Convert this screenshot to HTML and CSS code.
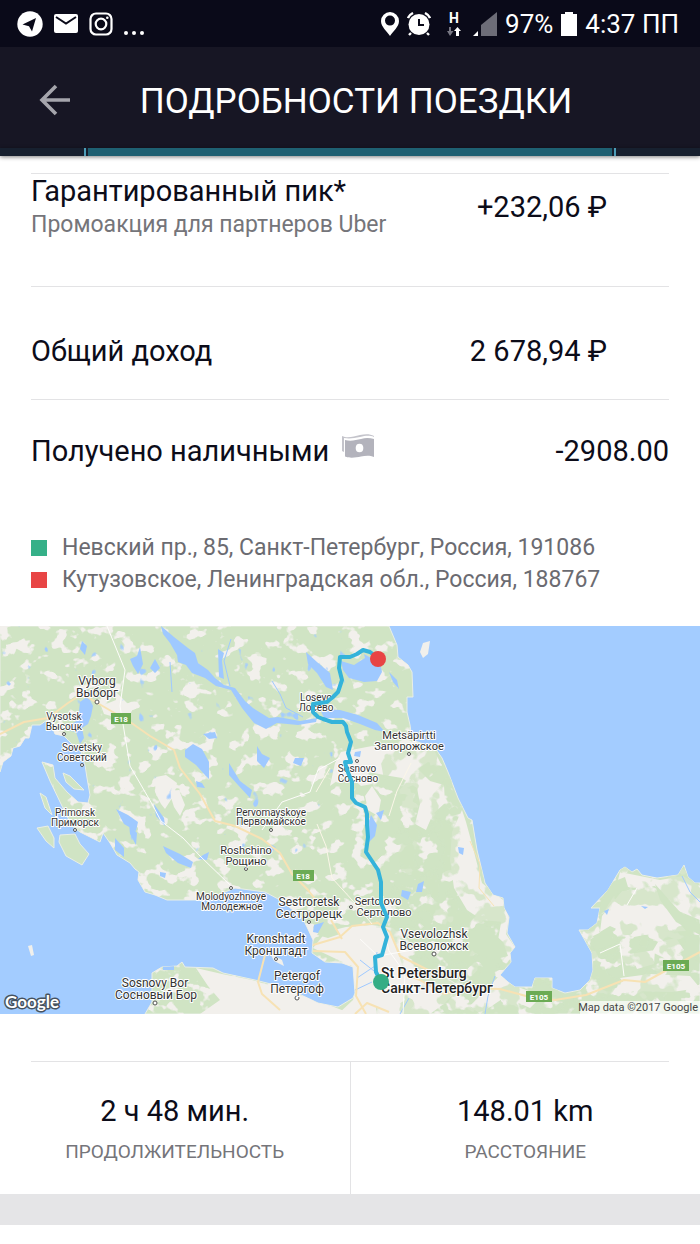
FILE: index.html
```html
<!DOCTYPE html>
<html lang="ru">
<head>
<meta charset="utf-8">
<meta name="viewport" content="width=device-width, initial-scale=1">
<title>Подробности поездки</title>
<link rel="stylesheet" href="styles.css">
</head>
<body>
<div class="status">
  <div class="status-side">
    <svg width="26" height="26" viewBox="0 0 26 26"><circle cx="13" cy="13" r="12.7" fill="#fff"/><path d="M5.500 13.600 19 7l-4 13.500-3-5.300z" fill="#0a0a19"/></svg>
    <svg width="24" height="19" viewBox="0 0 24 19"><rect width="24" height="19" rx="2" fill="#fff"/><path d="m2 3 10 6.500L22 3" fill="none" stroke="#0a0a19" stroke-width="2"/></svg>
    <svg width="24" height="24" viewBox="0 0 24 24" fill="none" stroke="#fff" stroke-width="2.200"><rect x="1.500" y="1.500" width="21" height="21" rx="5.500"/><circle cx="12" cy="12" r="5.300"/><circle cx="18.300" cy="5.800" r="1.300" fill="#fff" stroke="none"/></svg>
    <svg width="20" height="26" viewBox="0 0 20 26" fill="#fff"><circle cx="2" cy="22" r="2"/><circle cx="10" cy="22" r="2"/><circle cx="18" cy="22" r="2"/></svg>
  </div>
  <div class="status-side status-right">
    <svg width="18" height="24" viewBox="0 0 18 24"><path fill="#fff" fill-rule="evenodd" d="M9 0a9 9 0 0 1 9 9c0 6-6 10-9 15C6 19 0 15 0 9a9 9 0 0 1 9-9zm0 3.600a5 5 0 1 0 0 10 5 5 0 0 0 0-10z"/></svg>
    <svg width="24" height="24" viewBox="0 0 24 24"><circle cx="12" cy="12.500" r="10.500" fill="#fff"/><path d="M12 7v6h5" fill="none" stroke="#0a0a19" stroke-width="2"/><path d="M1 6q1-3 5-5M18 1q4 2 5 5M4 21l-2 2M20 21l2 2" fill="none" stroke="#fff" stroke-width="2.400"/></svg>
    <span class="net"><span class="net-type">H</span><svg width="14" height="9" viewBox="0 0 14 9"><path d="M2 0h2v4h2.500L3 9 0 4h2z" fill="#777783"/><path d="M9 9V4H7l3.500-4L14 4h-2v5z" fill="#fff"/></svg></span>
    <svg width="24" height="24" viewBox="0 0 24 24"><path d="M8 24V13L24 0v24z" fill="#6d6d78"/><path d="M0 24l5-5v5z" fill="#fff"/></svg>
    <span class="status-text">97%</span>
    <svg width="16" height="24" viewBox="0 0 16 24"><path d="M4 0h8v2h4v22H0V2h4z" fill="#fff"/></svg>
    <span class="status-text">4:37 ПП</span>
  </div>
</div>
<header class="toolbar">
  <button class="back" type="button" aria-label="Назад"><svg width="32" height="32" viewBox="0 0 32 32" fill="none" stroke="#a5a5ac" stroke-width="3.600"><path d="M31 16H3M17 2 3 16l14 14"/></svg></button>
  <h1 class="title">ПОДРОБНОСТИ ПОЕЗДКИ</h1>
</header>
<div class="pager"><span class="pager-tick"></span><span class="pager-fill"></span><span class="pager-tick"></span></div>

<main>
  <section class="rows">
    <div class="row">
      <div><div class="label">Гарантированный пик*</div><div class="note">Промоакция для партнеров Uber</div></div>
      <div class="value value-offset">+232,06 ₽</div>
    </div>
    <div class="row row-total">
      <div class="label">Общий доход</div>
      <div class="value">2 678,94 ₽</div>
    </div>
    <div class="row row-cash">
      <div class="label label-icon">Получено наличными
        <svg width="32" height="26" viewBox="0 0 32 26"><path d="M0 2c6 3 12 0 18-1 6-1 10-1 14 1v1C27 1 23 2 18 3 12 4 8 5 2 4v14L0 17z" fill="#c4c4cb"/><path d="M3 6c6 1.500 11 0 16-1 5-1.500 9-1 13 0v18c-4-2-9-1.500-13-.5-5 1-11 2-16 0z" fill="#b3b3bc"/><ellipse cx="17.500" cy="14" rx="3.800" ry="4.300" fill="#fff"/></svg>
      </div>
      <div class="value value-end">-2908.00</div>
    </div>
  </section>
  <ul class="stops">
    <li class="stop"><span class="dot dot-from"></span>Невский пр., 85, Санкт-Петербург, Россия, 191086</li>
    <li class="stop"><span class="dot dot-to"></span>Кутузовское, Ленинградская обл., Россия, 188767</li>
  </ul>

  <svg class="map" viewBox="0 0 700 388" role="img" aria-label="Маршрут поездки">
    <defs>
      <filter id="fields" x="0" y="0" width="100%" height="100%" color-interpolation-filters="sRGB">
        <feTurbulence type="fractalNoise" baseFrequency="0.06 0.07" numOctaves="3" seed="11"/>
        <feColorMatrix values="0 0 0 0 .948  0 0 0 0 .94  0 0 0 0 .925  14 0 0 0 -8"/>
      </filter>
      <filter id="woods" x="0" y="0" width="100%" height="100%" color-interpolation-filters="sRGB">
        <feTurbulence type="fractalNoise" baseFrequency="0.05 0.05" numOctaves="3" seed="23"/>
        <feColorMatrix values="0 0 0 0 .816  0 0 0 0 .894  0 0 0 0 .769  14 0 0 0 -7.200"/>
      </filter>
      <filter id="ponds" x="0" y="0" width="100%" height="100%" color-interpolation-filters="sRGB">
        <feTurbulence type="fractalNoise" baseFrequency="0.08 0.06" numOctaves="2" seed="5"/>
        <feColorMatrix values="0 0 0 0 .64  0 0 0 0 .8  0 0 0 0 1  0 16 0 0 -11.800"/>
      </filter>
      <clipPath id="land"><path id="coast" d="M0 0H389L397 19 398 31 408 39 412 46 413 71 407 71 407 86 410 99 412 114 435 122 442 132 448 146 458 172 468 192 472 194 477 224 485 257 493 269 503 272 504 282 509 291 507 307 515 321 510 327 511 336 500 349 508 356 515 361 532 361 535 352 552 352 552 362 565 367 580 364 590 354 593 344 592 327 583 311 579 304 588 304 597 297 600 282 591 282 608 264 620 244 625 241 632 246 637 243 642 249 657 252 678 249 684 239 688 251 695 257 700 257V388H145L152 376 152 347 162 341 177 340 182 336 185 341 213 342 223 347 255 354 267 357 282 361 295 366 318 377 338 381 353 372 355 367 353 341 342 337 325 336 312 327 313 314 307 301 302 291 280 274 265 266 235 262 215 270 200 274 167 274 155 269 145 266 138 254 139 246 135 243 130 237 117 229 110 217 103 207 100 216 90 211 80 206 72 200 62 180 50 155 42 136 53 139 55 152 67 166 78 176 88 177 90 169 87 152 85 139 80 122 72 118 64 110 55 108 51 98 47 94 40 99 32 99 29 112 25 112 20 120 13 122 11 130 3 136 0 146Z"/></clipPath>
      <clipPath id="east"><path d="M376 110 450 110 520 270V388H376V300L400 240ZM575 230H700V388H520V350H575Z"/></clipPath>
    </defs>
    <rect width="700" height="388" fill="#a3ccff"/>
    <g fill="#d0e4c4" stroke="#e9eee6" stroke-width="1">
      <use href="#coast"/>
      <path d="M37 202 48 200 54 212 54 222 46 215ZM60 209 75 208 80 218 89 228 82 239 66 230 59 216ZM40 167 46 171 52 189 45 182ZM63 147 70 150 78 158 84 164 74 163 66 156Z"/>
    </g>
    <path d="M270 327 282 334 284 340 274 335ZM28 320 32 319 34 329 31 330ZM423 17 430 15 428 28 423 32 420 26ZM80 122 86 122 84 128Z" fill="#f1f0ec"/>
    <g clip-path="url(#land)">
      <rect width="700" height="388" filter="url(#fields)"/>
      <g fill="#f2f0ec">
        <path d="M116 66 133 83 127 93 118 92 104 88 101 80 116 74ZM156 151 166 149 177 157 174 169 165 183 161 178 155 166ZM169 165 179 164 185 179 180 190 174 181Z"/>
        <path d="M341 126 372 120 408 119 434 124 442 140 428 136 418 143 430 155 444 159 445 177 433 188 426 204 415 198 420 178 417 162 402 152 390 150 368 146 372 158 361 160 350 150 341 152 330 160 335 137ZM372 160 381 174 378 190 368 184 365 170ZM462 184 466 196 472 218 482 257 503 274 504 296 482 294 467 284 454 262 450 234 452 206Z"/>
        <path d="M326 306 346 301 372 299 393 302 403 317 412 340 439 347 460 360 445 377 430 388H338L353 374 355 367 352 340 334 332 313 322ZM504 280 509 292 506 308 514 320 506 331 498 314ZM500 349 518 361 542 370 530 382 505 371 480 388 470 380Z"/>
        <path d="M620 246 640 250 660 254 683 250 700 260V294L676 284 655 260 632 262 617 258ZM622 265 655 262 670 285 686 305 660 306 634 311 610 300 600 306 602 290ZM658 316 676 312 684 324 668 334 652 326ZM630 328 655 324 654 338 637 343ZM620 352 650 348 690 350 700 362 672 366 630 365Z"/>
        <path d="M196 342 222 348 252 354 294 367 334 381 352 388H200L220 374 208 360Z"/>
      </g>
      <g clip-path="url(#east)" opacity=".8"><rect width="700" height="388" filter="url(#woods)"/></g>
      <path fill="#f2f0ec" d="M356 300 388 302 396 318 402 340 398 358 405 374 390 384 362 380 358 340Z"/>
      <g fill="#d0e4c4"><path d="M468 305 489 303 503 316 508 330 491 334 475 327 466 318ZM610 257 625 251 628 261 613 271 604 286 596 290 605 270ZM655 258 680 286 700 298V309L676 296 660 274ZM326 295 340 308 328 312 317 309ZM593 310 610 302 614 318 596 324Z"/></g>
      <rect width="345" height="260" filter="url(#ponds)"/>
      <g fill="#9fc9ff">
        <path d="M161 0 174 11 188 22 195 27 198 37 208 44 215 52 224 59 235 62 245 75 253 82 269 92 278 91 300 95 317 92 316 96 298 99 277 97 266 103 254 97 242 82 231 64 216 60 205 52 192 47 186 39 178 36 177 29 170 17 163 8Z"/>
        <path d="M80 76 88 70 93 80 91 90 88 98 82 102 84 112 80 118 76 106 66 104 70 99 78 94ZM185 124 193 118 202 123 209 136 209 153 204 148 196 139 185 131ZM196 155 202 157 205 162 197 161ZM203 108 215 106 217 112 209 113ZM218 23 224 27 222 35 224 53 219 51ZM130 33 137 30 140 21 143 38 138 48 133 40ZM150 42 155 33 160 42 155 47ZM82 15 87 20 85 29 80 23Z"/>
        <path d="M306 26 317 36 330 47 333 64 326 61 317 47 308 38ZM341 35 354 39 365 32 364 28 380 37 382 46 377 55 364 56 349 52 343 44ZM389 46 397 54 399 63 393 56ZM320 83 340 84 358 89 377 97 385 106 375 104 360 98 343 92 324 92ZM229 137 240 155 252 164 250 172 238 159 229 149ZM257 120 262 128 270 132 264 142 257 135ZM295 132 304 132 301 140 293 137ZM116 183 128 189 138 196 136 205 124 198ZM154 178 164 192 165 200 156 190ZM115 212 124 222 124 231 115 224ZM163 220 180 228 193 236 191 242 178 237 166 227ZM203 229 209 226 207 234 198 233ZM160 246 166 247 165 252 160 250ZM129 198 137 207 136 219 130 208ZM371 189 377 199 375 210 369 216 368 198ZM402 264 411 266 408 274 401 270ZM418 258 424 255 422 266 416 266ZM458 221 464 222 463 229 459 227ZM314 299 324 296 318 307 313 306ZM163 340 174 340 174 344 163 344ZM604 285 609 283 607 289ZM641 280 648 281 645 283ZM376 187 384 184 381 194ZM355 126 361 125 360 131 354 130Z"/>
      </g>
      <g fill="none" stroke="#9fc9ff" stroke-width="1">
        <path d="M231 13 224 35 230 60M170 36 172 66M272 55 280 68 286 82 303 91M357 352 375 340 377 326M353 365 372 356M360 334 374 345M495 350 488 370 485 388M409 372 400 388M682 250 690 266 700 276"/>
      </g>
      <g fill="none" stroke="#f7e2b4" stroke-width="2" stroke-linejoin="round">
        <path d="M0 108 24 96 48 92 68 77 82 68 106 82 130 96 150 110 174 124 180 142 200 168 215 195 235 200 262 213 280 227 292 248 308 264 318 277"/>
        <path d="M235 319 290 320 313 319 340 311 352 300 378 297 390 306 400 330 430 345M313 325 345 326 358 341 356 370 366 388M355 388 367 377 389 386M331 294 342 313"/>
        <path d="M398 346 420 354 444 368 470 362 500 363 526 370 555 374 586 369 624 354 645 356 665 345 700 326"/>
        <path d="M470 215 480 238 479 262 494 280" stroke-width="1"/><path d="M317 198 326 220 332 252 353 275 372 298M411 137 397 165 389 190M316 166 330 142" stroke-width="1" stroke="#fbf6e8"/>
      </g>
      <g fill="none" stroke="#fdfcfa" stroke-width="1"><path d="M107 0 125 44 120 80 130 140 152 178 161 195 183 212 200 230 230 259M340 132 318 144 310 166 282 176 262 204M600 327 620 318 624 350M627 279 637 262M384 304 389 325 405 347 403 388M360 313 378 330 430 321"/></g>
    </g>
    <path d="M265 329 258 356 262 368 280 384" fill="none" stroke="#f7e2b4" stroke-width="2"/>
    <g fill="#6bab54"><rect x="111" y="87" width="20" height="11"/><rect x="293" y="244" width="21" height="11"/><rect x="526" y="365" width="26" height="11"/><rect x="663" y="334" width="26" height="11"/></g>
    <g class="shield"><text x="121" y="96">E18</text><text x="303" y="253">E18</text><text x="539" y="374">E105</text><text x="676" y="343">E105</text></g>
    <g fill="#fff" stroke="#555" stroke-width="1">
      <circle cx="97" cy="76" r="2"/><circle cx="64" cy="108" r="1.500"/><circle cx="82" cy="139" r="1.500"/><circle cx="75" cy="204" r="1.500"/><circle cx="271" cy="204" r="1.500"/><circle cx="246" cy="243" r="1.500"/><circle cx="231" cy="262" r="1.500"/><circle cx="309" cy="296" r="1.500"/><circle cx="351" cy="281" r="1.500"/><circle cx="276" cy="333" r="1.500"/><circle cx="297" cy="372" r="2"/><circle cx="155" cy="377" r="2"/><circle cx="434" cy="328" r="2"/><circle cx="357" cy="135" r="1.500"/><circle cx="409" cy="128" r="1.500"/>
    </g>
    <g class="town town-big">
      <text x="97" y="59">Vyborg</text><text x="97" y="71">Выборг</text>
      <text x="309" y="280">Sestroretsk</text><text x="309" y="292">Сестрорецк</text>
      <text x="434" y="312">Vsevolozhsk</text><text x="434" y="324">Всеволожск</text>
      <text x="276" y="317">Kronshtadt</text><text x="276" y="329">Кронштадт</text>
      <text x="297" y="354">Petergof</text><text x="297" y="367">Петергоф</text>
      <text x="155" y="361">Sosnovy Bor</text><text x="156" y="373">Сосновый Бор</text>
    </g>
    <g class="town">
      <text x="409" y="113">Metsäpirtti</text><text x="409" y="124">Запорожское</text>
      <text x="378" y="279">Sertolovo</text><text x="384" y="290">Сертолово</text>
      <text x="246" y="228">Roshchino</text><text x="246" y="239">Рощино</text>
    </g>
    <g class="town town-small">
      <text x="64" y="94">Vysotsk</text><text x="64" y="104">Высоцк</text>
      <text x="82" y="125">Sovetsky</text><text x="82" y="135">Советский</text>
      <text x="75" y="190">Primorsk</text><text x="75" y="200">Приморск</text>
      <text x="271" y="190">Pervomayskoye</text><text x="271" y="199">Первомайское</text>
      <text x="231" y="274">Molodyozhnoye</text><text x="232" y="284">Молодежное</text>
      <text x="316" y="75">Losevo</text><text x="316" y="85">Лосево</text>
      <text x="357" y="146">Sosnovo</text><text x="358" y="156">Сосново</text>
    </g>
    <g class="city"><text x="381" y="352">St Petersburg</text><text x="381" y="367">Санкт-Петербург</text></g>
    <path d="M378 32 370 26 363 24 357 28 350 31 340 31 339 42 342 54 338 66 333 71 327 76 313 78 313 86 318 91 323 93 332 96 343 96 346 100 347 106 351 116 348 127 351 136 345 136 347 144 352 156 352 172 356 177 365 181 367 188 367 199 368 211 366 226 378 244 381 256 381 277 387 291 383 301 387 311 382 329 375 331 376 346 381 356" fill="none" stroke="#34b3da" stroke-width="4" stroke-linejoin="round"/>
    <circle cx="378" cy="33" r="8" fill="#e84444"/><circle cx="381" cy="356" r="8" fill="#34ad85"/>
    <rect x="580" y="375" width="120" height="13" fill="#fff" opacity=".7"/>
    <text class="credit" x="698" y="385">Map data ©2017 Google</text>
    <text class="brand" x="5" y="382">Google</text>
  </svg>

  <hr class="rule">
  <section class="stats">
    <div class="stat"><div class="stat-value">2 ч 48 мин.</div><div class="stat-name">ПРОДОЛЖИТЕЛЬНОСТЬ</div></div>
    <div class="stat"><div class="stat-value">148.01 km</div><div class="stat-name">РАССТОЯНИЕ</div></div>
  </section>
  <div class="band"></div>
</main>
</body>
</html>
```
FILE: styles.css
```css
* { box-sizing: border-box; }
body { margin: 0; background: #fff; color: #0c0c19; font-family: Roboto, "Noto Sans", sans-serif; }
svg { display: block; flex: none; }

.status { display: flex; justify-content: space-between; align-items: center; height: 47px; padding: 0 21px 0 17px; background: #0a0a19; color: #fff; }
.status-side { display: flex; align-items: center; gap: 11px; }
.status-right { gap: 8px; }
.status-text { font-size: 26px; line-height: 32px; white-space: nowrap; }
.net { display: flex; flex-direction: column; align-items: center; gap: 3px; padding: 0 4px 0 8px; }
.net-type { font-size: 14px; line-height: 12px; font-weight: 700; }

.toolbar { display: flex; align-items: center; height: 101px; padding: 8px 32px 0; background: #171624; color: #fff; }
.back { width: 46px; padding: 4px 7px 8px; border: 0; background: none; }
.title { flex: 1; margin: 0 34px 0 0; font-size: 35px; line-height: 44px; font-weight: 400; text-align: center; white-space: nowrap; }
.pager { position: relative; display: flex; gap: 2px; height: 8px; padding: 0 12%; background: #17202f; box-shadow: 0 1px 4px rgba(0, 0, 0, .5); }
.pager-tick { width: 2px; background: #4d9db8; }
.pager-fill { flex: 1; background: #1e6072; }

.rows { padding: 17px 31px 0; }
.row { display: flex; justify-content: space-between; align-items: flex-start; min-height: 113px; border-top: 1px solid #e3e3e5; }
.label, .value { font-size: 29px; line-height: 34px; white-space: nowrap; }
.note { font-size: 23px; line-height: 34px; color: #75757a; }
.value { padding-right: 62px; }
.value-offset { padding-top: 16px; }
.row-total { padding-top: 47px; }
.row-cash { padding-top: 34px; }
.value-end { padding-right: 0; }
.label-icon { display: flex; gap: 13px; }

.stops { margin: 0; padding: 20px 31px 30px; list-style: none; }
.stop { display: flex; align-items: center; gap: 15px; font-size: 23px; line-height: 32px; color: #6b6b71; white-space: nowrap; }
.dot { width: 16px; height: 16px; }
.dot-from { background: #35b088; }
.dot-to { background: #e84545; }

.map { width: 100%; height: auto; }
.town { font-size: 11px; fill: #333; text-anchor: middle; stroke: #fff; stroke-width: 2px; stroke-linejoin: round; paint-order: stroke; }
.town-big { font-size: 12px; }
.town-small { font-size: 10px; }
.city { font-size: 14px; font-weight: 500; fill: #222; stroke: #fff; stroke-width: 2px; paint-order: stroke; }
.shield { font-size: 8px; font-weight: 700; fill: #fff; text-anchor: middle; }
.credit { font-size: 11px; fill: #444; text-anchor: end; }
.brand { font-family: Lato, sans-serif; font-size: 17px; font-weight: 700; fill: #fff; stroke: #46525f; stroke-width: 3px; stroke-linejoin: round; paint-order: stroke; }

.rule { margin: 47px 31px 0; border: 0; border-top: 1px solid #e3e3e5; }
.stats { display: flex; }
.stat { flex: 1; padding: 31px 0 26px; text-align: center; }
.stat:first-child { border-right: 1px solid #e3e3e5; }
.stat-value { font-size: 29px; line-height: 36px; }
.stat-name { padding-top: 7px; font-size: 19px; line-height: 32px; color: #75757a; }
.band { height: 31px; background: #e5e5e7; }
```
